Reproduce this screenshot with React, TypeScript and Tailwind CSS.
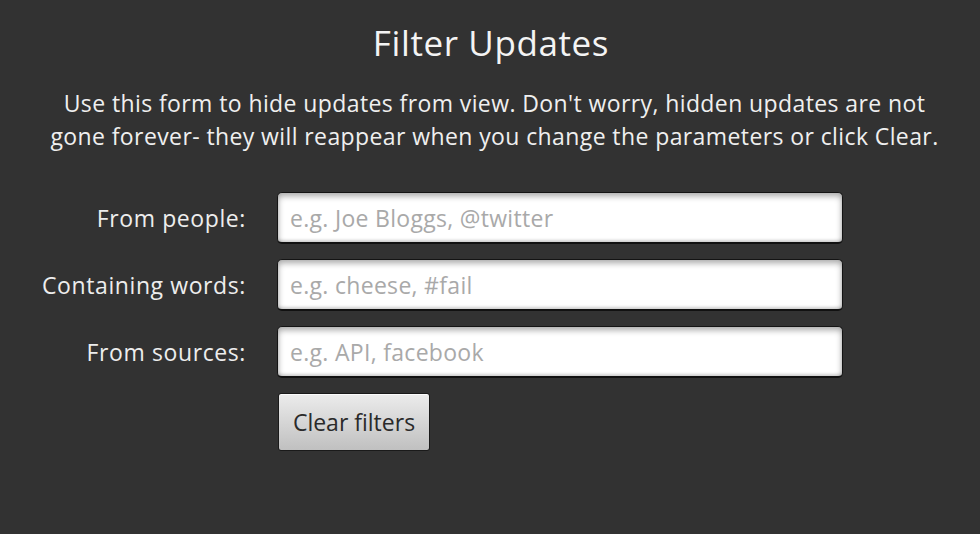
const fields = [
  { label: "From people:", placeholder: "e.g. Joe Bloggs, @twitter" },
  { label: "Containing words:", placeholder: "e.g. cheese, #fail" },
  { label: "From sources:", placeholder: "e.g. API, facebook" },
];

export default function App() {
  return (
    <div
      className="h-[534px] w-[980px] overflow-hidden bg-[#323232] text-[#f2f2f2]"
      style={{ fontFamily: "'Open Sans', Lato, sans-serif" }}
    >
      <h1 className="pt-[20px] text-center text-[35px] leading-[46px] tracking-[0.6px] text-[#f4f4f4] ml-[2px]">
        Filter Updates
      </h1>
      <p className="mt-[21px] pl-[9px] text-center text-[23px] leading-[33px] tracking-[0.4px] text-[#efefef]">
        Use this form to hide updates from view. Don't worry, hidden updates are not
        <br />
        gone forever- they will reappear when you change the parameters or click Clear.
      </p>

      <div className="mt-[39px] grid grid-cols-[246px_566px] gap-x-[31px] gap-y-[15px]">
        {fields.map((f) => (
          <div key={f.label} className="contents">
            <label className="flex items-center justify-end text-[23px] tracking-[0.6px] text-[#ededed]">
              {f.label}
            </label>
            <input
              placeholder={f.placeholder}
              className="h-[52px] w-[566px] rounded-[5px] border border-[#141414] border-b-2 border-b-[#111] bg-white px-[12px] text-[23px] tracking-[0.3px] text-[#333] shadow-[inset_0_3px_6px_rgba(0,0,0,0.35),inset_0_-2px_3px_rgba(0,0,0,0.15)] outline-none placeholder:text-[#a9a9a9]"
            />
          </div>
        ))}
        <div />
        <button className="h-[58px] w-[152px] rounded-[3px] border border-[#1a1a1a] bg-gradient-to-b from-[#ececec] to-[#c0c0c0] text-[23px] text-[#2a2a2a] shadow-[inset_0_1px_0_rgba(255,255,255,0.8)] ml-[1px]">
          Clear filters
        </button>
      </div>
    </div>
  );
}
